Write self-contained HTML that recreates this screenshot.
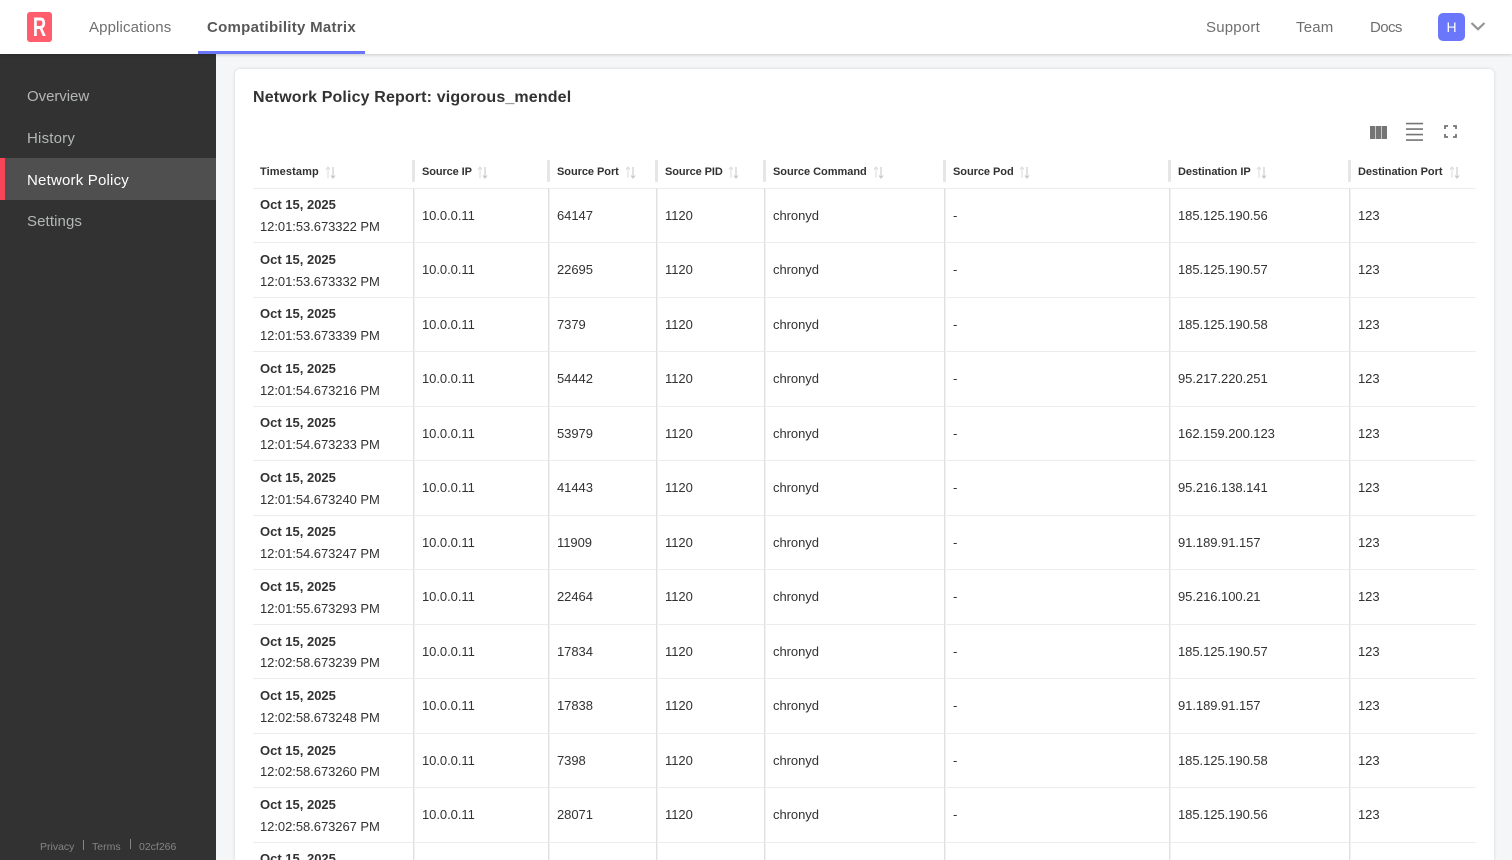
<!DOCTYPE html>
<html lang="en"><head><meta charset="utf-8"><title>Network Policy Report</title>
<style>
*{box-sizing:border-box;margin:0;padding:0}
html,body{width:1512px;height:860px;overflow:hidden;background:#fff;font-family:"Liberation Sans",sans-serif}
#p{position:absolute;left:0;top:0;width:1512px;height:860px;overflow:hidden;background:#f5f6f8}
.abs,.nav{position:absolute;white-space:nowrap}
.top{position:absolute;left:0;top:0;width:1512px;height:54px;background:#fff;box-shadow:0 1px 3px rgba(0,0,0,.18);z-index:3}
.nav{top:18px;font-size:15px;line-height:20px;color:#6f6f6f}
.side{position:absolute;left:0;top:54px;width:216px;height:806px;background:#323232;z-index:2}
.side a{position:absolute;left:27px;font-size:15px;line-height:20px;color:#b3b7b5;white-space:nowrap}
.card{position:absolute;left:235px;top:69px;width:1259px;height:800px;background:#fff;border-radius:5px;box-shadow:0 0 3px rgba(0,0,0,.14)}
h1{position:absolute;left:253px;top:88px;font-size:16px;line-height:20px;font-weight:700;color:#323232;letter-spacing:.14px;white-space:nowrap}
.row{position:absolute;left:253px;width:1223px;height:55px;border-bottom:1px solid #ededed;font-size:13px;color:#323232}
.row span{position:absolute;top:19.9px;line-height:15px;white-space:nowrap;letter-spacing:-.05px}
.row b{position:absolute;left:7px;top:9px;line-height:15px;font-weight:700;white-space:nowrap}
.row i{position:absolute;left:7px;top:31px;line-height:15px;font-style:normal;white-space:nowrap;letter-spacing:-.05px}
.c1{left:169px}.c2{left:304px}.c3{left:412px}.c4{left:520px}.c5{left:700px}.c6{left:925px}.c7{left:1105px}
.v{position:absolute;top:188px;width:1px;height:672px;background:#e0e0e0;box-shadow:1px 0 0 #f2f2f2}
.g{position:absolute;top:160px;width:3px;height:22px;background:#e6e6e6;border-radius:1px}
.th{position:absolute;top:164px;font-size:11px;line-height:15px;font-weight:700;color:#323232;padding-top:1px;white-space:nowrap}
.hline{position:absolute;left:253px;top:188px;width:1223px;height:1px;background:#ededed}
.s{position:absolute;top:166px;width:11px;height:13px}
</style></head><body><div id="p">
<div class="top"></div>
<div class="abs" style="left:27px;top:12px;width:25px;height:30px;background:#ff5c6c;border-radius:3px;z-index:4"></div>
<div class="abs" style="left:27px;top:12px;width:25px;height:30px;z-index:5;color:#fff;font-weight:700;font-size:27px;line-height:30px;text-align:center;transform:scaleX(.68)">R</div>
<div class="nav" style="left:89px;z-index:4;letter-spacing:.12px">Applications</div>
<div class="nav" style="left:207px;z-index:4;font-weight:700;color:#585858;letter-spacing:.28px">Compatibility Matrix</div>
<div class="abs" style="left:198px;top:51px;width:167px;height:3px;background:#6a77fb;z-index:4"></div>
<div class="nav" style="left:1206px;z-index:4;letter-spacing:.2px">Support</div>
<div class="nav" style="left:1296px;z-index:4;letter-spacing:.2px">Team</div>
<div class="nav" style="left:1370px;z-index:4;letter-spacing:-.6px">Docs</div>
<div class="abs" style="left:1438px;top:13px;width:27px;height:28px;background:#6a77fb;border-radius:5px;color:#fff;font-size:14px;line-height:28px;text-align:center;z-index:4">H</div>
<svg class="abs" style="left:1470px;top:21px;z-index:4" width="16" height="11" viewBox="0 0 16 11"><path d="M1.5 2 8 8.2 14.5 2" fill="none" stroke="#959595" stroke-width="2.2"/></svg>

<div class="side">
<a style="top:33px;letter-spacing:-.05px">Overview</a>
<a style="top:75px;letter-spacing:.2px">History</a>
<div class="abs" style="left:0;top:104px;width:216px;height:42px;background:#4f4f4f"></div>
<div class="abs" style="left:0;top:104px;width:5px;height:42px;background:#f7465a"></div>
<a style="top:117px;color:#fff;letter-spacing:.2px">Network Policy</a>
<a style="top:158px;letter-spacing:.1px">Settings</a>
<div class="abs" style="left:40px;top:786px;font-size:10.5px;line-height:14px;color:#858585">Privacy</div>
<div class="abs" style="left:83px;top:786px;width:1px;height:10px;background:#858585"></div>
<div class="abs" style="left:92px;top:786px;font-size:10.5px;line-height:14px;color:#858585">Terms</div>
<div class="abs" style="left:130px;top:785px;width:1px;height:10px;background:#858585"></div>
<div class="abs" style="left:139px;top:786px;font-size:10.5px;line-height:14px;color:#858585">02cf266</div>
</div>

<div class="card"></div>
<h1>Network Policy Report: vigorous_mendel</h1>

<svg class="abs" style="left:1370px;top:125.5px" width="17" height="13" viewBox="0 0 17 13"><path fill="#757575" d="M0 0h5.3v13H0zM5.9 0h5.3v13H5.9zM11.8 0H17v13h-5.2z"/></svg>
<svg class="abs" style="left:1406px;top:122px" width="17" height="20" viewBox="0 0 17 20"><path fill="#757575" d="M0 .7h17v1.7H0zM0 6.2h17v1.7H0zM0 11.7h17v1.7H0zM0 17.2h17v1.7H0z"/></svg>
<svg class="abs" style="left:1444px;top:125px" width="13" height="13" viewBox="0 0 13 13"><path fill="none" stroke="#757575" stroke-width="1.8" d="M1 4V1h3M9 1h3v3M12 9v3H9M4 12H1V9"/></svg>

<div class="th" style="left:260px;letter-spacing:.1px">Timestamp</div>
<div class="th" style="left:422px;letter-spacing:-.1px">Source IP</div>
<div class="th" style="left:557px;letter-spacing:-.05px">Source Port</div>
<div class="th" style="left:665px;letter-spacing:-.1px">Source PID</div>
<div class="th" style="left:773px;letter-spacing:-.03px">Source Command</div>
<div class="th" style="left:953px;letter-spacing:-.05px">Source Pod</div>
<div class="th" style="left:1178px;letter-spacing:-.05px">Destination IP</div>
<div class="th" style="left:1358px;letter-spacing:-.03px">Destination Port</div>

<svg class="s" style="left:325px" viewBox="0 0 11 13"><path d="M3 12V1M1 3.5 3 1l2 2.5" fill="none" stroke="#dcdfdf" stroke-width="1.1"/><path d="M8 1v11M6 9.5 8 12l2-2.5" fill="none" stroke="#c6c9c9" stroke-width="1.1"/></svg>
<svg class="s" style="left:477px" viewBox="0 0 11 13"><path d="M3 12V1M1 3.5 3 1l2 2.5" fill="none" stroke="#dcdfdf" stroke-width="1.1"/><path d="M8 1v11M6 9.5 8 12l2-2.5" fill="none" stroke="#c6c9c9" stroke-width="1.1"/></svg>
<svg class="s" style="left:625px" viewBox="0 0 11 13"><path d="M3 12V1M1 3.5 3 1l2 2.5" fill="none" stroke="#dcdfdf" stroke-width="1.1"/><path d="M8 1v11M6 9.5 8 12l2-2.5" fill="none" stroke="#c6c9c9" stroke-width="1.1"/></svg>
<svg class="s" style="left:728px" viewBox="0 0 11 13"><path d="M3 12V1M1 3.5 3 1l2 2.5" fill="none" stroke="#dcdfdf" stroke-width="1.1"/><path d="M8 1v11M6 9.5 8 12l2-2.5" fill="none" stroke="#c6c9c9" stroke-width="1.1"/></svg>
<svg class="s" style="left:873px" viewBox="0 0 11 13"><path d="M3 12V1M1 3.5 3 1l2 2.5" fill="none" stroke="#dcdfdf" stroke-width="1.1"/><path d="M8 1v11M6 9.5 8 12l2-2.5" fill="none" stroke="#c6c9c9" stroke-width="1.1"/></svg>
<svg class="s" style="left:1019px" viewBox="0 0 11 13"><path d="M3 12V1M1 3.5 3 1l2 2.5" fill="none" stroke="#dcdfdf" stroke-width="1.1"/><path d="M8 1v11M6 9.5 8 12l2-2.5" fill="none" stroke="#c6c9c9" stroke-width="1.1"/></svg>
<svg class="s" style="left:1256px" viewBox="0 0 11 13"><path d="M3 12V1M1 3.5 3 1l2 2.5" fill="none" stroke="#dcdfdf" stroke-width="1.1"/><path d="M8 1v11M6 9.5 8 12l2-2.5" fill="none" stroke="#c6c9c9" stroke-width="1.1"/></svg>
<svg class="s" style="left:1449px" viewBox="0 0 11 13"><path d="M3 12V1M1 3.5 3 1l2 2.5" fill="none" stroke="#dcdfdf" stroke-width="1.1"/><path d="M8 1v11M6 9.5 8 12l2-2.5" fill="none" stroke="#c6c9c9" stroke-width="1.1"/></svg>

<div class="hline"></div>

<div class="row" style="top:188px"><b>Oct 15, 2025</b><i>12:01:53.673322 PM</i><span class="c1">10.0.0.11</span><span class="c2">64147</span><span class="c3">1120</span><span class="c4">chronyd</span><span class="c5">-</span><span class="c6">185.125.190.56</span><span class="c7">123</span></div>
<div class="row" style="top:242.5px"><b>Oct 15, 2025</b><i>12:01:53.673332 PM</i><span class="c1">10.0.0.11</span><span class="c2">22695</span><span class="c3">1120</span><span class="c4">chronyd</span><span class="c5">-</span><span class="c6">185.125.190.57</span><span class="c7">123</span></div>
<div class="row" style="top:297px"><b>Oct 15, 2025</b><i>12:01:53.673339 PM</i><span class="c1">10.0.0.11</span><span class="c2">7379</span><span class="c3">1120</span><span class="c4">chronyd</span><span class="c5">-</span><span class="c6">185.125.190.58</span><span class="c7">123</span></div>
<div class="row" style="top:351.5px"><b>Oct 15, 2025</b><i>12:01:54.673216 PM</i><span class="c1">10.0.0.11</span><span class="c2">54442</span><span class="c3">1120</span><span class="c4">chronyd</span><span class="c5">-</span><span class="c6">95.217.220.251</span><span class="c7">123</span></div>
<div class="row" style="top:406px"><b>Oct 15, 2025</b><i>12:01:54.673233 PM</i><span class="c1">10.0.0.11</span><span class="c2">53979</span><span class="c3">1120</span><span class="c4">chronyd</span><span class="c5">-</span><span class="c6">162.159.200.123</span><span class="c7">123</span></div>
<div class="row" style="top:460.5px"><b>Oct 15, 2025</b><i>12:01:54.673240 PM</i><span class="c1">10.0.0.11</span><span class="c2">41443</span><span class="c3">1120</span><span class="c4">chronyd</span><span class="c5">-</span><span class="c6">95.216.138.141</span><span class="c7">123</span></div>
<div class="row" style="top:515px"><b>Oct 15, 2025</b><i>12:01:54.673247 PM</i><span class="c1">10.0.0.11</span><span class="c2">11909</span><span class="c3">1120</span><span class="c4">chronyd</span><span class="c5">-</span><span class="c6">91.189.91.157</span><span class="c7">123</span></div>
<div class="row" style="top:569.5px"><b>Oct 15, 2025</b><i>12:01:55.673293 PM</i><span class="c1">10.0.0.11</span><span class="c2">22464</span><span class="c3">1120</span><span class="c4">chronyd</span><span class="c5">-</span><span class="c6">95.216.100.21</span><span class="c7">123</span></div>
<div class="row" style="top:624px"><b style="top:10px">Oct 15, 2025</b><i>12:02:58.673239 PM</i><span class="c1">10.0.0.11</span><span class="c2">17834</span><span class="c3">1120</span><span class="c4">chronyd</span><span class="c5">-</span><span class="c6">185.125.190.57</span><span class="c7">123</span></div>
<div class="row" style="top:678.5px"><b>Oct 15, 2025</b><i>12:02:58.673248 PM</i><span class="c1">10.0.0.11</span><span class="c2">17838</span><span class="c3">1120</span><span class="c4">chronyd</span><span class="c5">-</span><span class="c6">91.189.91.157</span><span class="c7">123</span></div>
<div class="row" style="top:733px"><b style="top:10px">Oct 15, 2025</b><i>12:02:58.673260 PM</i><span class="c1">10.0.0.11</span><span class="c2">7398</span><span class="c3">1120</span><span class="c4">chronyd</span><span class="c5">-</span><span class="c6">185.125.190.58</span><span class="c7">123</span></div>
<div class="row" style="top:787.5px"><b>Oct 15, 2025</b><i>12:02:58.673267 PM</i><span class="c1">10.0.0.11</span><span class="c2">28071</span><span class="c3">1120</span><span class="c4">chronyd</span><span class="c5">-</span><span class="c6">185.125.190.56</span><span class="c7">123</span></div>
<div class="row" style="top:842px;border-bottom:0"><b>Oct 15, 2025</b></div>

<div class="v" style="left:413px"></div><div class="v" style="left:548px"></div><div class="v" style="left:656px"></div><div class="v" style="left:764px"></div><div class="v" style="left:944px"></div><div class="v" style="left:1169px"></div><div class="v" style="left:1349px"></div>
<div class="g" style="left:412px"></div><div class="g" style="left:547px"></div><div class="g" style="left:655px"></div><div class="g" style="left:763px"></div><div class="g" style="left:943px"></div><div class="g" style="left:1168px"></div><div class="g" style="left:1348px"></div>
</div></body></html>
